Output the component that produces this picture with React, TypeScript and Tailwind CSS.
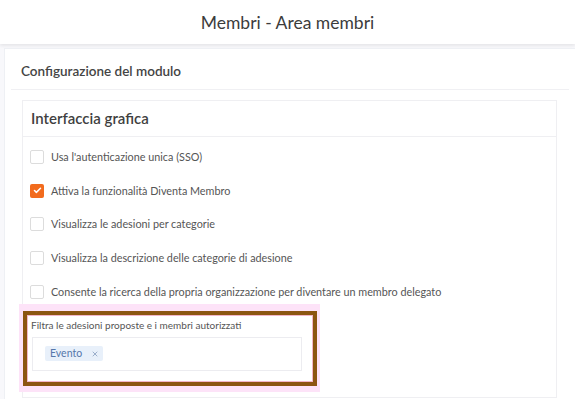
import { Check, X } from "lucide-react"

const options = [
  { label: "Usa l'autenticazione unica (SSO)", checked: false },
  { label: "Attiva la funzionalità Diventa Membro", checked: true },
  { label: "Visualizza le adesioni per categorie", checked: false },
  { label: "Visualizza la descrizione delle categorie di adesione", checked: false },
  { label: "Consente la ricerca della propria organizzazione per diventare un membro delegato", checked: false },
]

function Checkbox({ checked }: { checked: boolean }) {
  return (
    <span
      className={
        checked
          ? "flex size-[14px] shrink-0 items-center justify-center rounded-[2px] bg-[#f26b1d]"
          : "flex size-[14px] shrink-0 items-center justify-center rounded-[2px] border border-[#dcdcdc] bg-white"
      }
    >
      {checked && <Check className="size-[9px] text-white" strokeWidth={4} />}
    </span>
  )
}

export default function App() {
  return (
    <div className="min-h-[399px] overflow-hidden bg-[#f8f8fb] font-['Lato',sans-serif]">
      <header className="relative z-10 flex h-[44px] items-center justify-center bg-white pt-[2px] text-[17.5px] text-[#3c3c3c] shadow-[0_2px_3px_rgba(0,0,0,0.07)]">
        Membri - Area membri
      </header>

      <main className="pl-[4px] pt-[4px]">
        <div className="border-l border-t border-[#eef0f4] bg-white pb-[3px]">
          <div className="mx-[6px] flex h-[41px] items-end border-b border-[#f0f0f3] pb-[8px] pl-[10px]">
            <h1 className="text-[13.5px] font-semibold text-[#444]">Configurazione del modulo</h1>
          </div>

          <section className="ml-[17px] mr-[18px] mt-[10px] border border-[#efeff2]">
            <div className="flex h-[36px] items-center border-b border-[#efeff2] pl-[8px]">
              <h2 className="text-[15px] font-semibold text-[#3f3f3f]">Interfaccia grafica</h2>
            </div>

            <div className="flex flex-col pl-[7px] pt-[3px]">
              {options.map((o) => (
                <label key={o.label} className="flex h-[33.8px] items-center gap-[7px]">
                  <Checkbox checked={o.checked} />
                  <span className="whitespace-nowrap text-[10.8px] text-[#555]">{o.label}</span>
                </label>
              ))}

              <div className="mb-[5px] ml-[-11px] mt-[-5px] w-[301px] bg-[#fde3f8] pb-[6px] pl-[4px] pr-[3px] pt-[7px]">
                <div className="border-[4px] border-[#8c5611]">
                  <div className="border border-[#f3b6c8] bg-white pb-[10px] pl-[3px] pt-[2px]">
                    <div className="text-[10px] leading-[15px] text-[#555]">
                      Filtra le adesioni proposte e i membri autorizzati
                    </div>
                    <div className="ml-[1px] mr-[10px] mt-[4px] flex h-[34px] items-center border border-[#ececf0] pl-[12px]">
                      <span className="flex h-[15px] items-center gap-[9px] rounded-[2px] bg-[#e8f0fa] pl-[5px] pr-[4px] text-[10.5px] text-[#5577aa]">
                        Evento
                        <X className="size-[8px] text-[#8aa0c0]" strokeWidth={2.5} />
                      </span>
                    </div>
                  </div>
                </div>
              </div>
            </div>
          </section>
        </div>
      </main>
    </div>
  )
}
